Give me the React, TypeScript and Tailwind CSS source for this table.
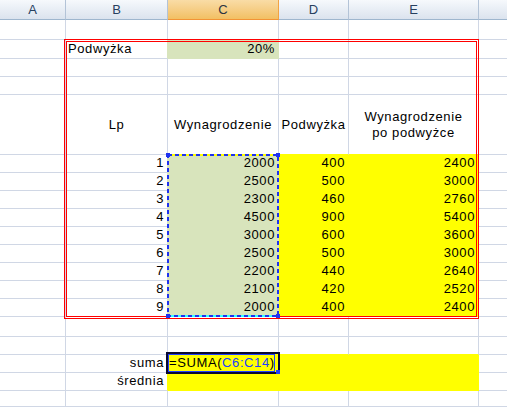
import clsx from 'clsx';

type Fill = 'none' | 'green' | 'yellow';
type Align = 'left' | 'right' | 'center';

const COLS = ['A', 'B', 'C', 'D', 'E', 'F'];
const ROWS = Array.from({ length: 19 }, (_, i) => i + 1);

const wyn = [2000, 2500, 2300, 4500, 3000, 2500, 2200, 2100, 2000];

const bgCls: Record<Fill, string> = {
  none: 'bg-white',
  green: 'bg-[#d8e4bc]',
  yellow: 'bg-[#ffff00]',
};
const rightCls: Record<Fill, string> = {
  none: 'border-r-[#d0d7e5]',
  green: 'border-r-[#d8e4bc]',
  yellow: 'border-r-[#ffff00]',
};
const bottomCls: Record<Fill, string> = {
  none: 'border-b-[#d0d7e5]',
  green: 'border-b-[#d8e4bc]',
  yellow: 'border-b-[#ffff00]',
};
const alignCls: Record<Align, string> = {
  left: 'items-end justify-start pl-[2px] pb-[1px]',
  right: 'items-end justify-end pr-[3px] pb-[1px]',
  center: 'items-center justify-center text-center whitespace-pre-line',
};

function fillOf(r: number, c: number): Fill {
  if (r === 2 && c === 2) return 'green';
  if (r >= 6 && r <= 14) {
    if (c === 2) return 'green';
    if (c === 3 || c === 4) return 'yellow';
  }
  if ((r === 17 || r === 18) && c >= 2 && c <= 4) return 'yellow';
  return 'none';
}

const edge = (a: Fill, b: Fill): Fill => (a !== 'none' ? a : b);

function contentOf(r: number, c: number): { text: string; align: Align } | null {
  if (r === 2 && c === 1) return { text: 'Podwyżka', align: 'left' };
  if (r === 2 && c === 2) return { text: '20%', align: 'right' };
  if (r === 5) {
    const heads = ['', 'Lp', 'Wynagrodzenie', 'Podwyżka', 'Wynagrodzenie\npo podwyżce'];
    if (heads[c]) return { text: heads[c], align: 'center' };
  }
  if (r >= 6 && r <= 14) {
    const i = r - 6;
    const raise = wyn[i] * 0.2;
    if (c === 1) return { text: String(i + 1), align: 'right' };
    if (c === 2) return { text: String(wyn[i]), align: 'right' };
    if (c === 3) return { text: String(raise), align: 'right' };
    if (c === 4) return { text: String(wyn[i] + raise), align: 'right' };
  }
  if (r === 17 && c === 1) return { text: 'suma', align: 'right' };
  if (r === 18 && c === 1) return { text: 'średnia', align: 'right' };
  return null;
}

export default function App() {
  return (
    <div className="relative w-[507px] h-[407px] overflow-hidden bg-white text-[13px] tracking-[0.6px] text-black font-['Liberation_Sans',Arial,sans-serif]">
      <div className="grid grid-cols-[66px_102px_111px_70px_130px_80px] grid-rows-[20px_20px_19px_18px_18px_60px_repeat(9,18px)_20px_18px_18px_18px_16px]">
        {COLS.map((col, c) => (
          <div
            key={col}
            className={clsx(
              'flex items-center justify-center border-r border-b tracking-normal',
              c === 2
                ? 'bg-linear-to-b from-[#f9dca6] to-[#f2c062] border-r-[#f2a343] border-b-[#f29436] text-[#2b3441]'
                : 'bg-linear-to-b from-[#f6f9fc] to-[#dbe3ee] border-r-[#b3c3d7] border-b-[#9eb6ce] text-[#27405f]'
            )}
          >
            {/* the F letter sits past the window edge */}
            {c < 5 ? col : null}
          </div>
        ))}
        {ROWS.map((r) =>
          COLS.map((col, c) => {
            const f = fillOf(r, c);
            const right = edge(f, c < 5 ? fillOf(r, c + 1) : 'none');
            const below = edge(f, fillOf(r + 1, c));
            const cnt = contentOf(r, c);
            return (
              <div
                key={col + r}
                className={clsx(
                  'flex overflow-hidden border-r border-b leading-[16px]',
                  bgCls[f],
                  rightCls[right],
                  bottomCls[below],
                  cnt && alignCls[cnt.align]
                )}
              >
                {cnt?.text}
              </div>
            );
          })
        )}
      </div>

      {/* double red border round B2:E14 */}
      <div className="pointer-events-none absolute left-[64px] top-[39px] w-[415px] h-[280px] border-[3px] border-double border-[#ff0000]" />

      {/* range reference C6:C14 */}
      <svg className="pointer-events-none absolute left-[166px] top-[153px]" width="114" height="166">
        <line x1="1" y1="2" x2="113" y2="2" stroke="#ffff00" strokeWidth="2" />
        <line x1="1" y1="163" x2="113" y2="163" stroke="#33ffff" strokeWidth="2" />
        <rect x="2" y="2" width="110" height="161" fill="none" stroke="#1e32f0" strokeWidth="2" strokeDasharray="4 3" />
        <rect x="0" y="0" width="4" height="4" fill="#1e32f0" />
        <rect x="110" y="0" width="4" height="4" fill="#1e32f0" />
        <rect x="0" y="161" width="4" height="4" fill="#1e32f0" />
        <rect x="110" y="161" width="4" height="4" fill="#1e32f0" />
      </svg>

      {/* in-cell editor on C17 */}
      <div className="absolute left-[166px] top-[352px] w-[114px] h-[22px] border-2 border-[#0a0a30]">
        <div className="absolute left-0 top-0 w-[107px] h-[18px] border border-[#2040ff]" />
        <span className="absolute left-[1px] bottom-[1px] leading-[16px] whitespace-nowrap">
          =SUMA(<span className="text-[#2040ff]">C6:C14</span>)
        </span>
      </div>
      <div className="absolute left-[276px] top-[370px] w-[4px] h-[4px] bg-[#2040ff]" />
    </div>
  );
}
